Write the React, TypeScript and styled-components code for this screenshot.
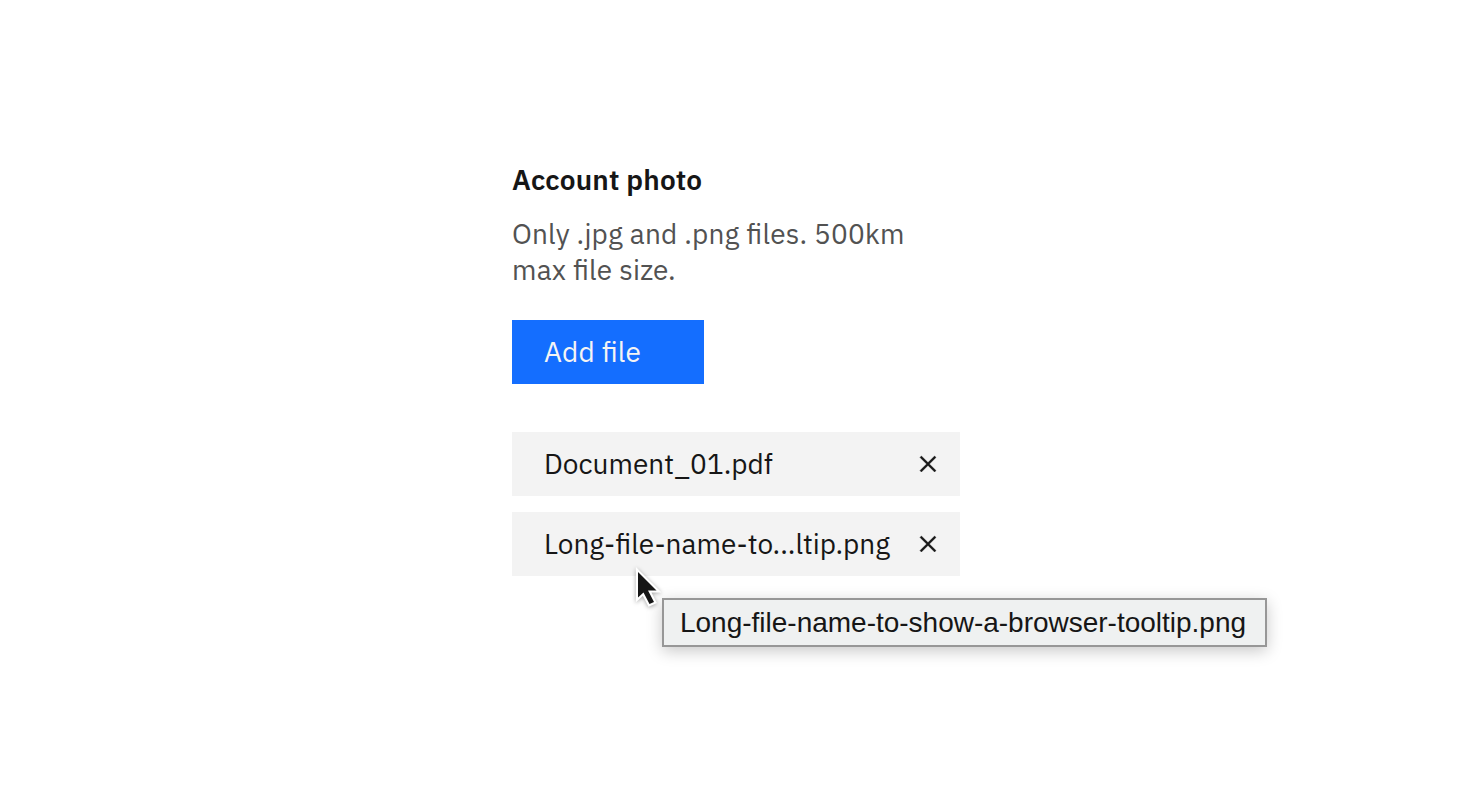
import React from "react";
import styled, { createGlobalStyle } from "styled-components";

const GlobalStyle = createGlobalStyle`
  body {
    margin: 0;
    background: #ffffff;
    color: #161616;
    font-family: "IBM Plex Sans", Roboto, "Noto Sans", sans-serif;
    font-feature-settings: "liga" 1;
  }
`;

const Page = styled.main`
  position: relative;
  box-sizing: border-box;
  width: 1472px;
  height: 808px;
  padding: 162px 0 0 512px;
  overflow: hidden;
`;

const Uploader = styled.section`
  display: flex;
  flex-direction: column;
  align-items: flex-start;
  width: 448px;
`;

const Title = styled.h1`
  margin: 0 0 18px;
  font-size: 28px;
  font-weight: 600;
  line-height: 36px;
  letter-spacing: 0.16px;
`;

const Description = styled.p`
  width: 410px;
  margin: 0 0 32px;
  color: #525252;
  font-size: 28px;
  line-height: 36px;
  letter-spacing: 0.19px;
`;

const AddButton = styled.button`
  width: 192px;
  height: 64px;
  margin: 0 0 48px;
  padding: 0 32px;
  border: 0;
  background: #146eff;
  color: #f4f4f4;
  font: inherit;
  font-size: 28px;
  font-feature-settings: "liga" 1;
  line-height: 64px;
  letter-spacing: 0.16px;
  text-align: left;
  white-space: nowrap;
`;

const FileList = styled.ul`
  display: flex;
  flex-direction: column;
  gap: 16px;
  width: 100%;
  margin: 0;
  padding: 0;
  list-style: none;
`;

const FileRow = styled.li`
  display: flex;
  align-items: center;
  justify-content: space-between;
  box-sizing: border-box;
  height: 64px;
  padding: 0 16px 0 32px;
  background: #f3f3f3;
`;

const FileName = styled.span`
  font-size: 28px;
  line-height: 64px;
  white-space: nowrap;
`;

const RemoveButton = styled.button`
  display: flex;
  flex: none;
  padding: 0;
  border: 0;
  background: none;
  color: #161616;
`;

const Tooltip = styled.div`
  position: absolute;
  left: 662px;
  top: 598px;
  box-sizing: border-box;
  width: 605px;
  height: 49px;
  padding: 0 0 0 16px;
  border: 2px solid #979797;
  background: #eff1f1;
  box-shadow: 0 4px 16px rgba(0, 0, 0, 0.22);
  font-family: "Liberation Sans", Arial, sans-serif;
  font-size: 28px;
  line-height: 45px;
  letter-spacing: -0.01px;
  white-space: nowrap;
`;

const Pointer = styled.svg`
  position: absolute;
  left: 628px;
  top: 562px;
  overflow: visible;
  filter: drop-shadow(0 1px 2px rgba(0, 0, 0, 0.35));
`;

const files = ["Document_01.pdf", "Long-file-name-to...ltip.png"];

function CloseIcon() {
  return (
    <svg
      width="32"
      height="32"
      viewBox="0 0 32 32"
      fill="currentColor"
      stroke="currentColor"
      strokeWidth="0.4"
      aria-hidden="true"
    >
      <path d="M24 9.4L22.6 8 16 14.6 9.4 8 8 9.4 14.6 16 8 22.6 9.4 24 16 17.4 22.6 24 24 22.6 17.4 16z" />
    </svg>
  );
}

export default function App() {
  return (
    <>
      <GlobalStyle />
      <Page>
        <Uploader>
          <Title>Account photo</Title>
          <Description>Only .jpg and .png files. 500km max file size.</Description>
          <AddButton type="button">Add file</AddButton>
          <FileList>
            {files.map((name) => (
              <FileRow key={name}>
                <FileName>{name}</FileName>
                <RemoveButton type="button" aria-label="Remove file">
                  <CloseIcon />
                </RemoveButton>
              </FileRow>
            ))}
          </FileList>
        </Uploader>
        <Tooltip role="tooltip">Long-file-name-to-show-a-browser-tooltip.png</Tooltip>
        <Pointer width="36" height="46" viewBox="0 0 36 46" aria-hidden="true">
          <path
            d="M10 10V35.5L15.5 30.5L21.5 42L26 40L20 28.5H28.5Z"
            fill="#161616"
            stroke="#ffffff"
            strokeWidth="4.2"
            paintOrder="stroke"
          />
        </Pointer>
      </Page>
    </>
  );
}
